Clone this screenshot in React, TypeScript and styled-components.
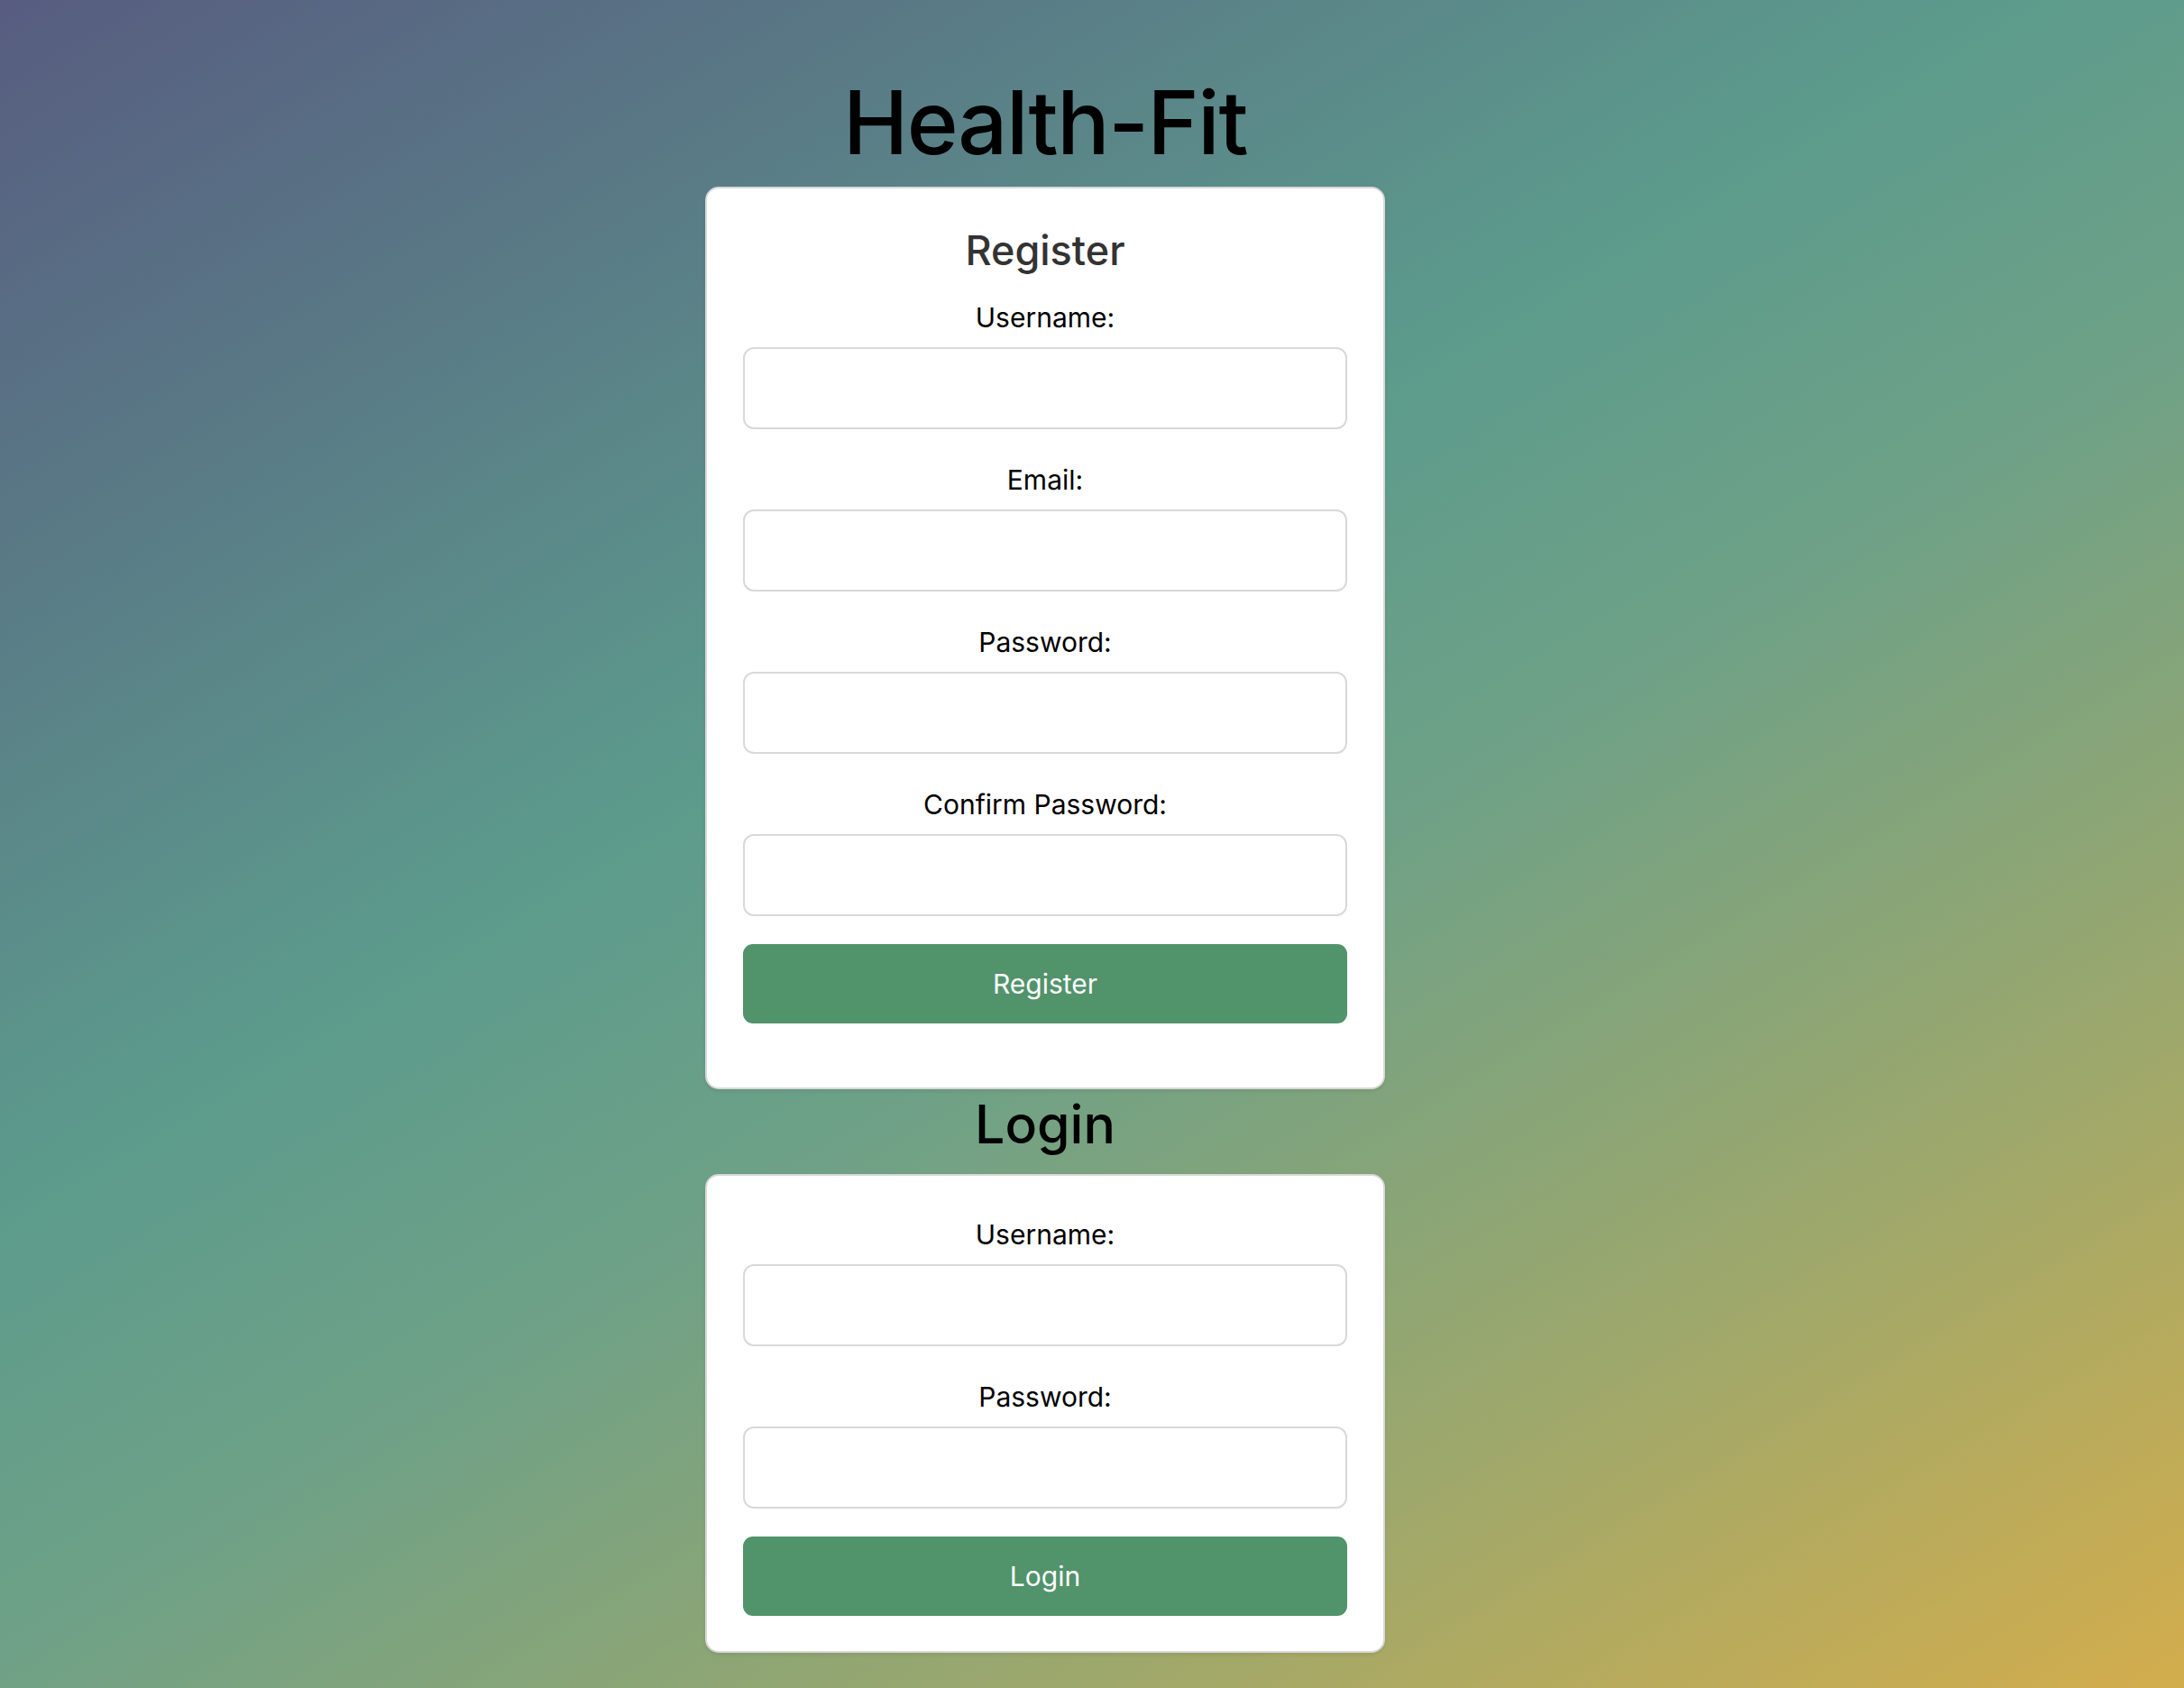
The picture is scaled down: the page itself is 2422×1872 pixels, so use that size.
import React, { useState } from 'react';
import styled, { createGlobalStyle } from 'styled-components';

const GlobalStyle = createGlobalStyle`
  html, body {
    margin: 0;
    padding: 0;
  }

  body {
    font-family: Inter, "Noto Sans", "Liberation Sans", sans-serif;
  }

  * {
    box-sizing: border-box;
  }
`;

const Page = styled.div`
  min-height: 100vh;
  display: flex;
  flex-direction: column;
  align-items: center;
  padding: 76px 104px 40px 0;
  background: linear-gradient(
    149deg,
    #575c80 0%,
    #5c9b8c 40%,
    #6ea187 55%,
    #9ea86b 78%,
    #d3ad4c 100%
  );
`;

const Title = styled.h1`
  margin: 0 0 11px;
  font-size: 97px;
  line-height: 120px;
  font-weight: 500;
  letter-spacing: -1.4px;
  color: #000;
`;

const SectionTitle = styled.h1`
  margin: 3px 0 20px;
  font-size: 59px;
  line-height: 71px;
  font-weight: 500;
  color: #000;
`;

const Card = styled.div<{ $padding: string }>`
  width: 754px;
  background: #fff;
  border: 2px solid #d8d8d8;
  border-radius: 15px;
  box-shadow: 0 2px 4px rgba(0, 0, 0, 0.08);
  padding: ${props => props.$padding};
`;

const CardHeading = styled.h2`
  margin: 0 0 29px;
  font-size: 45px;
  line-height: 54px;
  font-weight: 500;
  color: #333;
  text-align: center;
`;

const Form = styled.form`
  display: flex;
  flex-direction: column;
`;

const Field = styled.div`
  display: flex;
  flex-direction: column;
  margin-bottom: 38px;

  &:last-of-type {
    margin-bottom: 31px;
  }
`;

const Label = styled.label`
  font-size: 30px;
  line-height: 36px;
  color: #000;
  text-align: center;
  margin-bottom: 15px;
`;

const Input = styled.input`
  height: 91px;
  width: 100%;
  padding: 0 20px;
  border: 2px solid #d9d9d9;
  border-radius: 12px;
  font-size: 28px;
  font-family: inherit;
  outline: none;
`;

const Button = styled.button`
  height: 88px;
  width: 100%;
  border: none;
  border-radius: 11px;
  background: #51936b;
  color: #fff;
  font-size: 30px;
  font-family: inherit;
  cursor: pointer;
`;

interface FieldProps {
  id: string;
  label: string;
  type?: string;
  value: string;
  onChange: (v: string) => void;
}

const FormField: React.FC<FieldProps> = ({ id, label, type = 'text', value, onChange }) => (
  <Field>
    <Label htmlFor={id}>{label}</Label>
    <Input id={id} type={type} value={value} onChange={(e) => onChange(e.target.value)} />
  </Field>
);

const App: React.FC = () => {
  const [regUser, setRegUser] = useState('');
  const [regEmail, setRegEmail] = useState('');
  const [regPass, setRegPass] = useState('');
  const [regConfirm, setRegConfirm] = useState('');
  const [loginUser, setLoginUser] = useState('');
  const [loginPass, setLoginPass] = useState('');

  return (
    <>
      <GlobalStyle />
      <Page>
        <Title>Health-Fit</Title>
        <Card $padding="42px 40px 71px">
          <CardHeading>Register</CardHeading>
          <Form onSubmit={(e) => e.preventDefault()}>
            <FormField id="reg-username" label="Username:" value={regUser} onChange={setRegUser} />
            <FormField id="reg-email" label="Email:" type="email" value={regEmail} onChange={setRegEmail} />
            <FormField id="reg-password" label="Password:" type="password" value={regPass} onChange={setRegPass} />
            <FormField id="reg-confirm" label="Confirm Password:" type="password" value={regConfirm} onChange={setRegConfirm} />
            <Button type="submit">Register</Button>
          </Form>
        </Card>
        <SectionTitle>Login</SectionTitle>
        <Card $padding="47px 40px 39px">
          <Form onSubmit={(e) => e.preventDefault()}>
            <FormField id="login-username" label="Username:" value={loginUser} onChange={setLoginUser} />
            <FormField id="login-password" label="Password:" type="password" value={loginPass} onChange={setLoginPass} />
            <Button type="submit">Login</Button>
          </Form>
        </Card>
      </Page>
    </>
  );
};

export default App;
